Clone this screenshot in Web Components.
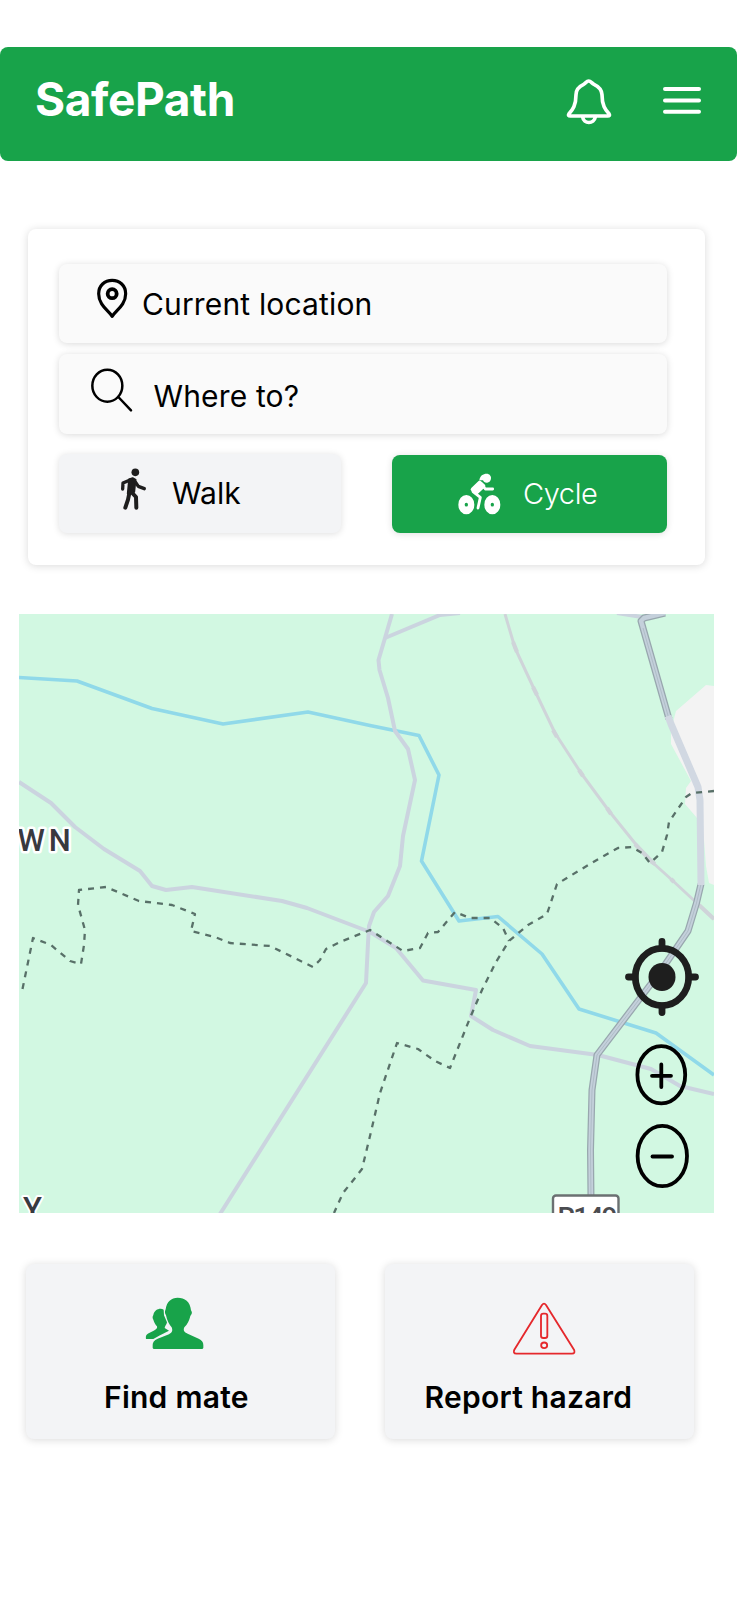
<!DOCTYPE html>
<html lang="en">
<head>
<meta charset="utf-8">
<title>SafePath</title>
<style>
html,body{margin:0;background:#fff}
body{font-family:Inter,"Liberation Sans",sans-serif;color:#000;width:739px;height:1600px;overflow:hidden}
</style>
</head>
<body>
<safe-app></safe-app>
<script>
const define=(name,html)=>customElements.define(name,class extends HTMLElement{
  constructor(){super();const t=document.createElement('template');t.innerHTML=html;
    this.attachShadow({mode:'open'}).append(t.content.cloneNode(true));}
});

define('app-header',`<style>
:host{display:flex;box-sizing:border-box;width:737px;height:114px;background:#18a34a;border-radius:8px;padding:0 36px 0 35px;align-items:flex-start}
h1{margin:24px auto 0 0;font-size:46px;line-height:56px;font-weight:700;color:#fff;letter-spacing:-.4px}
svg{display:block;fill:none;stroke:#fff;stroke-linecap:round;stroke-linejoin:round}
.bell{margin:30.5px 51px 0 0}.menu{margin-top:39px}
</style>
<h1>SafePath</h1>
<svg class="bell" width="46" height="48" viewBox="592 143 138 144" stroke-width="11"><path d="M660 152C653 152 652 159 645 162C630 169 622 178 622 193C622 225 612 238 601 250C598 255 600 257 605 257H717C722 257 724 255 721 250C710 238 700 225 700 193C699 178 691 169 676 162C669 159 667 152 660 152ZM642 260C645 282 676 282 680 260"/></svg>
<svg class="menu" width="38" height="28" viewBox="0 0 38 28" stroke-width="4"><path d="M2 3H36M2 14.4H36M2 25.8H36"/></svg>`);

define('search-panel',`<style>
:host{display:grid;box-sizing:border-box;width:677px;height:336px;margin:67.5px 0 0 28px;padding:35px 38px 0 30.5px;border-radius:8px;background:#fff;box-shadow:0 1px 8px rgba(0,0,0,.15);grid-template-rows:79.5px 79.5px 79px;row-gap:11px;align-content:start}
.modes{display:grid;grid-template-columns:282px 275px;justify-content:space-between;margin-top:9px}
</style>
<slot></slot><div class="modes"><slot name="mode"></slot></div>`);

define('search-field',`<style>
:host{display:flex;box-sizing:border-box;align-items:flex-start;background:#fafafa;border-radius:8px;box-shadow:0 1px 7px rgba(0,0,0,.15);padding-left:var(--pad)}
::slotted(svg){display:block;flex:none;margin-top:var(--iy)}
span{margin:var(--ty) 0 0 var(--gap);font-size:30px;line-height:36px;white-space:nowrap;font-weight:370;letter-spacing:.15px}
</style><slot name="icon"></slot><span><slot></slot></span>`);

define('mode-button',`<style>
:host{display:flex;box-sizing:border-box;height:79px;align-items:flex-start;background:#f3f4f6;border-radius:8px;box-shadow:0 1px 7px rgba(0,0,0,.13);padding-left:var(--pad)}
:host([active]){background:#18a34a;color:#fff;height:78px;margin-top:1px}
::slotted(svg){display:block;flex:none;margin-top:var(--iy)}
span{margin:var(--ty) 0 0 var(--gap);font-size:var(--fs,30px);line-height:36px;font-weight:var(--fw,380);white-space:nowrap;letter-spacing:var(--ls,0)}
</style><slot name="icon"></slot><span><slot></slot></span>`);

define('action-tile',`<style>
:host{display:flex;box-sizing:border-box;width:309px;height:175.5px;flex-direction:column;align-items:flex-start;background:#f3f4f6;border-radius:8px;box-shadow:0 1px 8px rgba(0,0,0,.15)}
::slotted(svg){display:block;flex:none;margin:var(--iy) 0 0 var(--ix)}
.icon{height:115.5px}
span{margin-left:var(--tx);font-size:30px;line-height:36px;font-weight:600;white-space:nowrap;letter-spacing:.26px}
</style><div class="icon"><slot name="icon"></slot></div><span><slot></slot></span>`);

define('area-map',`<style>
:host{display:block;width:695px;height:599px;margin:49px 0 0 19px;overflow:hidden}
svg{display:block}
.road{stroke:#cbd4df;stroke-width:4}
.water{stroke:#90d9e9;stroke-width:3.6}
.edge{stroke:#587068;stroke-width:2.3;stroke-dasharray:6 6}
.place{font:500 31px Roboto,"Liberation Sans",sans-serif;fill:#38393f;stroke:#fff;stroke-width:5;paint-order:stroke;stroke-linejoin:round;letter-spacing:4px}
</style>
<svg width="695" height="599" viewBox="19 614 695 599" fill="none" stroke-linejoin="round">
<path fill="#d2f8e2" d="M19 614H714V1213H19Z"/>
<path fill="#f3f3f3" d="M714 686L706 685L676 711L671 730L671 744L691 781L686 788L685 804L697 818L704 840L706 866L709 883L714 885Z"/>
<path class="water" d="M19 677.5L77 681L152 708.5L223 724L308 712L370 725.5L419 735.5L439 775L421.500 861L459 921L498 916.500L542 954L579 1009L656 1033L714 1075"/>
<g class="road">
<path d="M19 782L51 803L75 827L104 849L140 871L152 886L166 890L192 887L282 901L307 908L370 932L396 948L423 980.500L476 990L471 1016L493 1030L530 1046L598 1055L651 1069L680 1086L714 1094"/>
<path d="M392 614L385 638L378.500 660L379.500 670L388 698L395 731L408 749L415 780L403 836L400 866L388 896L374 912L369 926L368 943L366 983L220 1214"/>
<path d="M385 638L440 615L460 613M617 613L642 617"/></g>
<path stroke="#cfd4d9" stroke-width="3" d="M505 614L515 648L535 691L555 733L581 773L609 811L638 847L652 862L672 880L700 906L714 919"/>
<path stroke="#cfd4d9" stroke-width="4.200" d="M513 642L517 652M533 687L537 695M553 730L557 737M579 770L583 776M607 808L611 814M635 844L652 862L655 864M671 879L674 882M699 905L714 919"/>
<path stroke="#98a7ae" stroke-width="7" d="M665 613L644 618L641 621L643 628L669 719M701 884L696.500 903L688 931L660 972L597 1055L592 1090L590.500 1150L591 1200"/>
<path stroke="#c4d0db" stroke-width="4.500" d="M665 613L644 618L641 621L643 628L669 719M701 884L696.500 903L688 931L660 972L597 1055L592 1090L590.500 1150L591 1200"/>
<path stroke="#afbdc7" stroke-width="1" d="M643 628L669 719M701 884L696.500 903L688 931L660 972L597 1055L592 1090L590.500 1150L591 1200"/>
<path stroke="#d1d8e2" stroke-width="7" d="M668 716L671 724L698 787L700 800L701 885"/>
<path class="edge" d="M22.500 989L33 938L51 945L70 961L81 964L84 945L85 930L78 905L79 890L106 887L139 901L172 905L195 914L191 931L215 937L230 943L270 946L313 967L320 960L326 949L340 942L370 930L403 951L420 948L428 933L438 932L455 912L470 918L490 918L503 928L509 941"/>
<path class="edge" d="M714 791L692 793L686 797L669 822L667 835L662 852L650 863L642 853L632 847L618 848L600 858L580 870L557 884L547 914L528 925L509 941L496 962L482 990L470 1018L450 1068L435 1061L418 1049L397 1043L380 1093L370 1136L362 1169L355 1178L343 1193L334 1213"/>
<text class="place" x="17.500" y="851">WN</text>
<text class="place" x="23" y="1219" style="stroke-width:4">Y</text>
<rect x="553" y="1195.500" width="65.500" height="30" rx="3" fill="#fff" stroke="#6b7072" stroke-width="2.400"/>
<text x="557.500" y="1227" textLength="60" style="font:500 28px Roboto,sans-serif" fill="#4b4c50">R149</text>
<g stroke="#1e1e1e" stroke-width="6.800" stroke-linecap="round"><ellipse cx="662" cy="977" rx="26.700" ry="28.600"/><path d="M662 941.500V948M662 1006V1012.500M628.500 977H635M689 977H695.500"/></g>
<ellipse cx="662" cy="977" rx="13.500" ry="14" fill="#1e1e1e"/>
<g stroke="#000" stroke-width="3.800" stroke-linecap="round"><ellipse cx="661.300" cy="1074.700" rx="23.900" ry="28.600"/><path d="M661.300 1064.500V1087M652 1075.800H671"/><ellipse cx="662.300" cy="1156" rx="24.700" ry="30.200"/><path d="M652.500 1156.500H672"/></g>
</svg>`);

define('safe-app',`<style>
:host{display:flex;flex-direction:column;padding-top:47.3px;box-sizing:border-box}
svg{overflow:visible}
.tiles{display:flex;gap:50px;margin:51px 0 0 26px}
</style>
<app-header></app-header>
<search-panel>
<search-field style="--pad:37.500px;--iy:13.5px;--gap:14px;--ty:22px">
<svg slot="icon" width="32" height="42" viewBox="230 172 96 126" fill="none" stroke="#000"><path stroke-width="9.500" stroke-linejoin="round" d="M278.500 290C268 273 238 257 238 222C238 198 256 182 278.500 182S319 198 319 222C319 257 289 273 278.500 290Z"/><circle cx="278.500" cy="222" r="13.500" stroke-width="11.500"/></svg>Current location</search-field>
<search-field style="--pad:32px;--iy:13.5px;--gap:21px;--ty:24px">
<svg slot="icon" width="42" height="44" viewBox="213 442 126 132" fill="none" stroke="#000" stroke-width="7.500" stroke-linecap="round"><ellipse cx="262" cy="495" rx="45" ry="48"/><path d="M295 529L333 569"/></svg>Where to?</search-field>
<mode-button slot="mode" style="--pad:62.500px;--iy:14.5px;--gap:26px;--ty:21.300px">
<svg slot="icon" width="25" height="42" viewBox="303 745 75 126" fill="none" stroke="#1e1e1e" stroke-linecap="round" stroke-linejoin="round"><circle cx="346" cy="758" r="11.500" fill="#1e1e1e" stroke="none"/><path fill="#1e1e1e" stroke-width="5" d="M327 779L338 775L347 780L343 817L323 822Z"/><path stroke-width="10" d="M332 780L309 790L308 808M346 787L355 800L373 807"/><path stroke-width="12" d="M329 816L324 840L316 864M333 816L348 832L349 864"/></svg>Walk</mode-button>
<mode-button slot="mode" active style="--pad:66px;--iy:18.500px;--gap:22px;--ty:21.700px;--fs:29px;--fw:360;--ls:-.4px">
<svg slot="icon" width="43" height="42" viewBox="264 761 129 126" fill="#fff" stroke="#fff" stroke-linecap="round" stroke-linejoin="round"><path fill-rule="evenodd" stroke="none" d="M265 856A24 29 0 1 1 313 856A24 29 0 1 1 265 856ZM284 856A5 5.500 0 1 0 294 856A5 5.500 0 1 0 284 856ZM343 856A24 29 0 1 1 391 856A24 29 0 1 1 343 856ZM362 856A5 5.500 0 1 0 372 856A5 5.500 0 1 0 362 856Z"/><path stroke="none" d="M328 783C330 769 339 763 350 763C358 763 364 770 363 777C363 786 356 791 350 790C344 790 341 787 339 783Z"/><path stroke-width="12" d="M329 790L308 810L319 820L340 800Z"/><path fill="none" stroke-width="8.500" d="M334 793L346 809H368M309 817L331 834L324 866"/></svg>Cycle</mode-button>
</search-panel>
<area-map></area-map>
<div class="tiles">
<action-tile style="--iy:32.500px;--ix:118px;--tx:78px">
<svg slot="icon" width="60" height="56" viewBox="402 138 180 168" fill="#18a34a"><path d="M503 143C484 143 470 155 467 178C464 184 464 190 468 196C471 212 478 224 485 232C489 243 486 248 477 253L443 266C432 271 428 277 428 285V293Q428 297 433 297H575Q580 297 580 293V285C580 276 576 271 566 266L533 251C522 247 519 241 523 232C532 223 538 212 541 198C547 191 547 187 543 181C541 155 524 143 503 143Z"/><path d="M461 179C451 173 433 178 430 195C427 200 427 204 430 209C433 219 437 224 441 229C443 235 438 239 431 242L416 250C409 254 407 257 408 267H430L450 256L477 242L464 234C464 229 470 224 471 217L462 196Z"/></svg>Find mate</action-tile>
<action-tile style="--iy:37.200px;--ix:125.500px;--tx:39.500px">
<svg slot="icon" width="66" height="56" viewBox="422 153 198 168" fill="none" stroke="#e5282c" stroke-width="5.500" stroke-linejoin="round"><path d="M515 165Q521 157 527 165L611 299Q616 311 605 311H438Q427 311 432 299Z"/><rect x="512" y="191" width="19" height="73" rx="7"/><ellipse cx="521.500" cy="286" rx="9" ry="8.500"/></svg>Report hazard</action-tile>
</div>`);
</script>
</body>
</html>
